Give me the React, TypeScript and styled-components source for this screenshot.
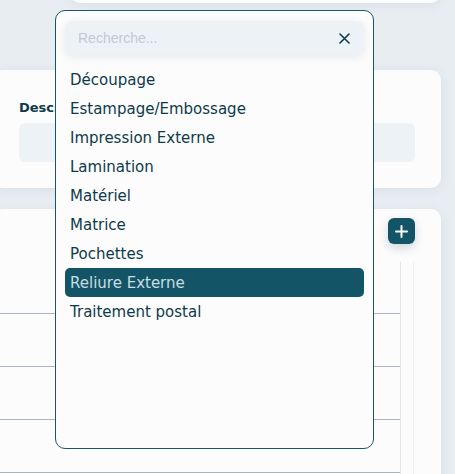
import React from "react"
import styled, { createGlobalStyle } from "styled-components"

const GlobalStyle = createGlobalStyle`
  html, body {
    margin: 0;
    padding: 0;
    background: #e8edf2;
    overflow: hidden;
  }
  * {
    box-sizing: border-box;
  }
`

const Page = styled.div`
  position: relative;
  width: 455px;
  height: 474px;
  overflow: hidden;
`

const Column = styled.div`
  display: flex;
  flex-direction: column;
  gap: 21px;
  margin-left: -7px;
  width: 448px;
`

const Card = styled.div`
  background: #fcfcfd;
  border-radius: 10px;
  box-shadow: 0 2px 12px rgba(40, 60, 90, 0.08);
`

const TopCard = styled(Card)`
  height: 44px;
  margin-top: -41px;
  margin-left: 77px;
  margin-bottom: 46px;
`

const FormCard = styled(Card)`
  padding: 30px 26px 26px;
`

const Label = styled.div`
  font-family: "DejaVu Sans", Verdana, sans-serif;
  font-weight: 700;
  font-size: 13px;
  line-height: 16px;
  color: #0e3a4a;
  margin-bottom: 7px;
`

const FieldBox = styled.div`
  height: 39px;
  border-radius: 6px;
  background: #edf2f7;
`

const TableCard = styled(Card)`
  height: 300px;
  padding-top: 9px;
`

const Toolbar = styled.div`
  display: flex;
  justify-content: flex-end;
  padding: 0 26px;
`

const AddButton = styled.button`
  width: 27px;
  height: 26px;
  border: none;
  border-radius: 6px;
  background: #135566;
  box-shadow: 0 4px 10px rgba(20, 40, 60, 0.18);
  display: flex;
  align-items: center;
  justify-content: center;
  padding: 0;
`

const TableArea = styled.div`
  display: flex;
  margin-top: 18px;
  padding-right: 27px;
  height: 260px;
`

const Rows = styled.div`
  flex: 1;
  display: flex;
  flex-direction: column;
`

const Row = styled.div<{ header?: boolean }>`
  height: ${({ header }) => (header ? "52px" : "53px")};
  border-bottom: 1px solid #a9b6c2;
  flex-shrink: 0;
`

const ScrollTrack = styled.div`
  width: 14px;
  border-left: 1px solid #e4e7ea;
  border-right: 1px solid #eceef0;
`

const Dropdown = styled.div`
  position: absolute;
  left: 55px;
  top: 10px;
  width: 319px;
  height: 439px;
  border: 1px solid #1b5466;
  border-radius: 10px;
  background: #fcfcfc;
  padding: 10px 9px;
  display: flex;
  flex-direction: column;
  gap: 10px;
`

const SearchBox = styled.div`
  height: 34px;
  border-radius: 8px;
  background: #edf2f7;
  box-shadow: 0 2px 8px rgba(30, 50, 70, 0.1);
  display: flex;
  align-items: center;
  padding: 0 14px 0 13px;
`

const SearchInput = styled.input`
  flex: 1;
  border: none;
  background: transparent;
  outline: none;
  padding: 0;
  font-family: "Liberation Sans", Arial, sans-serif;
  font-size: 14px;
  color: #0e3a4a;
  &::placeholder {
    color: #c3c9cf;
  }
`

const ClearButton = styled.span`
  display: flex;
  width: 12px;
  height: 12px;
  align-items: center;
  justify-content: center;
`

const OptionList = styled.div`
  display: flex;
  flex-direction: column;
`

const Option = styled.div<{ selected?: boolean }>`
  height: 29px;
  line-height: 30px;
  padding: 0 5px;
  border-radius: 5px;
  font-family: "DejaVu Sans", Verdana, sans-serif;
  font-size: 15px;
  color: ${({ selected }) => (selected ? "#c7dde3" : "#0e3a4a")};
  background: ${({ selected }) => (selected ? "#135566" : "transparent")};
  white-space: nowrap;
`

const options = [
  "Découpage",
  "Estampage/Embossage",
  "Impression Externe",
  "Lamination",
  "Matériel",
  "Matrice",
  "Pochettes",
  "Reliure Externe",
  "Traitement postal",
]

export default function App() {
  const selected = "Reliure Externe"
  return (
    <Page>
      <GlobalStyle />
      <Column>
        <TopCard />
        <FormCard>
          <Label>Description</Label>
          <FieldBox />
        </FormCard>
        <TableCard>
          <Toolbar>
            <AddButton>
              <svg width="13" height="13" viewBox="0 0 13 13">
                <path d="M6.5 1v11M1 6.5h11" stroke="#fff" strokeWidth="2" strokeLinecap="round" />
              </svg>
            </AddButton>
          </Toolbar>
          <TableArea>
            <Rows>
              <Row header />
              <Row />
              <Row />
              <Row />
            </Rows>
            <ScrollTrack />
          </TableArea>
        </TableCard>
      </Column>
      <Dropdown>
        <SearchBox>
          <SearchInput placeholder="Recherche..." />
          <ClearButton>
            <svg width="11" height="11" viewBox="0 0 11 11">
              <path d="M1 1l9 9M10 1l-9 9" stroke="#0e3a4a" strokeWidth="1.6" strokeLinecap="round" />
            </svg>
          </ClearButton>
        </SearchBox>
        <OptionList>
          {options.map(o => (
            <Option key={o} selected={o === selected}>
              {o}
            </Option>
          ))}
        </OptionList>
      </Dropdown>
    </Page>
  )
}
